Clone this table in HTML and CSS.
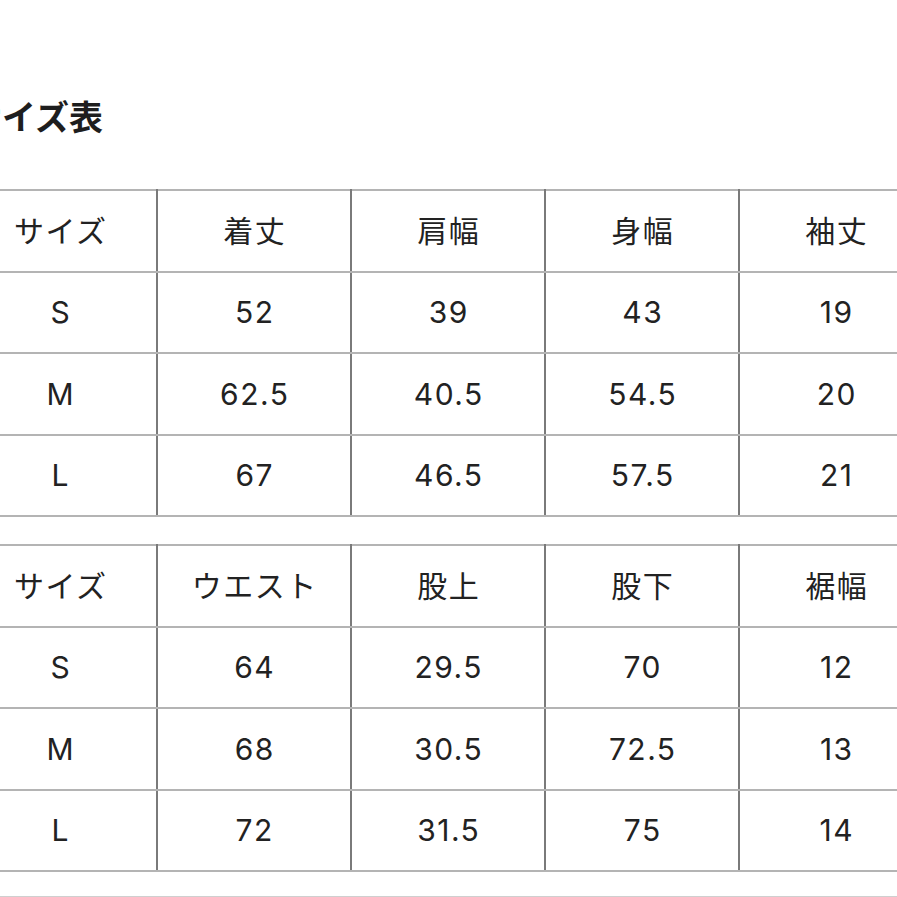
FILE: index.html
```html
<!DOCTYPE html>
<html lang="ja">
<head>
<meta charset="utf-8">
<title>サイズ表</title>
<link rel="stylesheet" href="styles.css">
</head>
<body>
<div class="page">
  <h1 class="title">サイズ表</h1>
  <table class="size-table">
    <tr><td>サイズ</td><td>着丈</td><td>肩幅</td><td>身幅</td><td>袖丈</td></tr>
    <tr><td>S</td><td>52</td><td>39</td><td>43</td><td>19</td></tr>
    <tr><td>M</td><td>62.5</td><td>40.5</td><td>54.5</td><td>20</td></tr>
    <tr><td>L</td><td>67</td><td>46.5</td><td>57.5</td><td>21</td></tr>
  </table>
  <table class="size-table second">
    <tr><td>サイズ</td><td>ウエスト</td><td>股上</td><td>股下</td><td>裾幅</td></tr>
    <tr><td>S</td><td>64</td><td>29.5</td><td>70</td><td>12</td></tr>
    <tr><td>M</td><td>68</td><td>30.5</td><td>72.5</td><td>13</td></tr>
    <tr><td>L</td><td>72</td><td>31.5</td><td>75</td><td>14</td></tr>
  </table>
  <div class="next-rule"></div>
</div>
</body>
</html>
```
FILE: styles.css
```css
html, body {
  margin: 0;
  padding: 0;
  background: #ffffff;
  overflow: hidden;
}
body {
  font-family: Inter, "Noto Sans CJK JP", "Noto Sans", sans-serif;
  color: #222222;
}
.page {
  margin-left: -38px;
  padding-top: 93px;
  width: 1000px;
}
.title {
  margin: 0;
  padding-left: 6px;
  font-family: "Noto Sans CJK JP", sans-serif;
  font-size: 34px;
  line-height: 46px;
  font-weight: 700;
  color: #1e1e1e;
}
.size-table {
  margin-top: 50px;
  border-collapse: collapse;
  table-layout: fixed;
  width: 970px;
}
.size-table.second {
  margin-top: 27px;
}
.size-table td {
  width: 192px;
  height: 79.5px;
  padding: 0;
  text-indent: 1.5px;
  text-align: center;
  vertical-align: middle;
  font-size: 30px;
  line-height: 1;
  font-weight: 400;
  letter-spacing: 1.5px;
  border-top: 2px solid #b4b4b4;
  border-bottom: 2px solid #b4b4b4;
  border-left: 2px solid #7a7a7a;
  border-right: 2px solid #7a7a7a;
}
.next-rule {
  margin-top: 24px;
  width: 970px;
  border-top: 2px solid #cfcfcf;
}
```
